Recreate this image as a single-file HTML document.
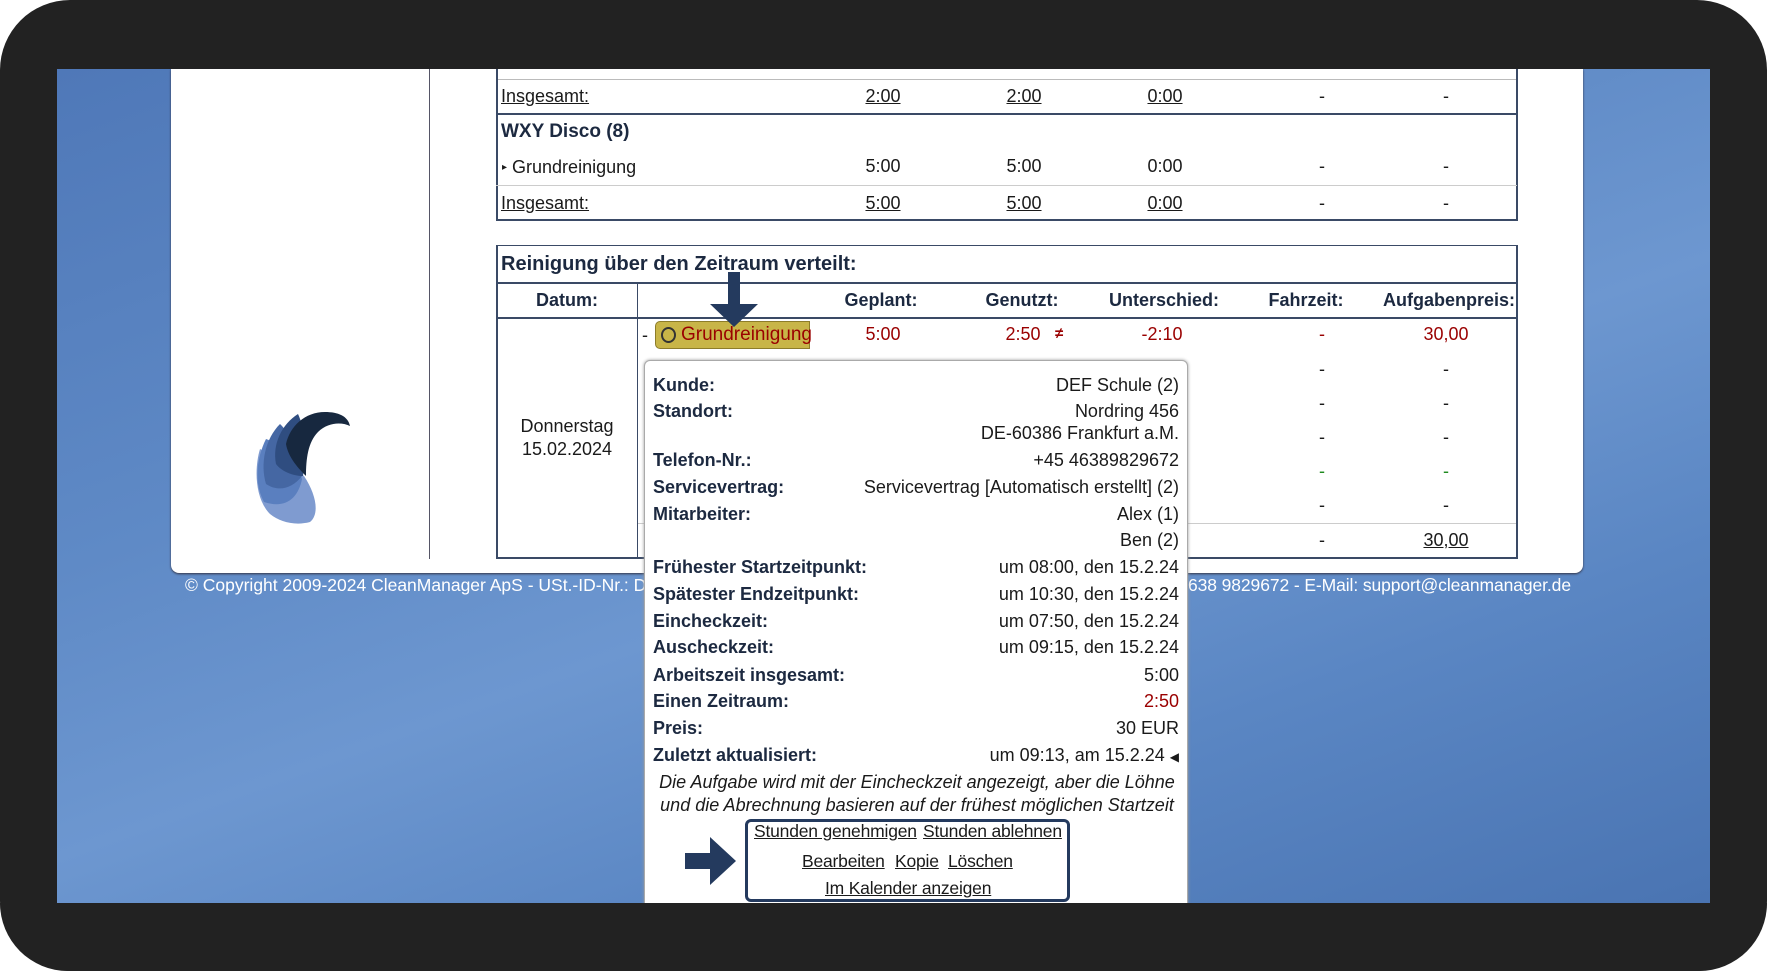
<!DOCTYPE html>
<html><head><meta charset="utf-8"><style>
*{margin:0;padding:0;box-sizing:border-box}
body{width:1767px;height:971px;background:#fff;overflow:hidden;position:relative;font-family:"Liberation Sans",sans-serif;font-size:18px;color:#1a1a1a}
.frame{position:absolute;left:0;top:0;width:1767px;height:971px;background:#222;border-radius:70px}
.blue{position:absolute;left:57px;top:69px;width:1653px;height:834px;background:linear-gradient(160deg,#4f78b8 0%,#5f8ac6 35%,#6d97d0 55%,#5a86c3 75%,#4a74b2 100%)}
.panel{position:absolute;left:171px;top:69px;width:1412px;height:504px;background:#fff;border-radius:0 0 8px 8px;box-shadow:0 1px 2px #334}
.a{position:absolute;white-space:nowrap}
.c{transform:translateX(-50%)}
.b{font-weight:bold;color:#1c2940}
.u{text-decoration:underline}
.red{color:#9a0000}
.hl{position:absolute;height:2px;background:#3a4a66}
.gl{position:absolute;height:1px;background:#ccc}
.vl{position:absolute;width:2px;background:#3a4a66}
.foot{position:absolute;top:575px;color:#fff;font-size:17.5px;white-space:nowrap}
.pop{position:absolute;left:644px;top:360px;width:544px;height:545px;background:#fff;border:1px solid #aaa;border-radius:6px 6px 0 0;box-shadow:0 0 3px #999}
.pop .a{font-size:18px}
.box{position:absolute;left:745px;top:819px;width:325px;height:83px;border:3px solid #243a5e;border-radius:6px}
.lk{font-size:17.5px;letter-spacing:-0.2px}
</style></head><body>
<div class="frame"></div>
<div class="blue"></div>
<div class="panel"></div>
<div class="vl" style="left:429px;top:69px;height:490px;width:1px;background:#556"></div>

<div class="gl" style="left:496px;top:79px;width:1021px;background:#bbb"></div>
<div class="vl" style="left:496px;top:69px;height:151px"></div>
<div class="vl" style="left:1516px;top:69px;height:151px"></div>
<div class="a u" style="left:501px;top:86px">Insgesamt:</div>
<div class="a u c" style="left:883px;top:86px">2:00</div>
<div class="a u c" style="left:1024px;top:86px">2:00</div>
<div class="a u c" style="left:1165px;top:86px">0:00</div>
<div class="a c" style="left:1322px;top:86px">-</div>
<div class="a c" style="left:1446px;top:86px">-</div>
<div class="hl" style="left:496px;top:113px;width:1022px"></div>
<div class="a b" style="left:501px;top:121px;font-size:19px">WXY Disco (8)</div>
<div class="a" style="left:502px;top:157px"><span style="font-size:10px;position:relative;top:-3px">&#9656;</span> Grundreinigung</div>
<div class="a c" style="left:883px;top:156px">5:00</div>
<div class="a c" style="left:1024px;top:156px">5:00</div>
<div class="a c" style="left:1165px;top:156px">0:00</div>
<div class="a c" style="left:1322px;top:156px">-</div>
<div class="a c" style="left:1446px;top:156px">-</div>
<div class="gl" style="left:496px;top:185px;width:1021px"></div>
<div class="a u" style="left:501px;top:193px">Insgesamt:</div>
<div class="a u c" style="left:883px;top:193px">5:00</div>
<div class="a u c" style="left:1024px;top:193px">5:00</div>
<div class="a u c" style="left:1165px;top:193px">0:00</div>
<div class="a c" style="left:1322px;top:193px">-</div>
<div class="a c" style="left:1446px;top:193px">-</div>
<div class="hl" style="left:496px;top:219px;width:1022px"></div>

<div style="position:absolute;left:496px;top:245px;width:1022px;height:314px;border:2px solid #3a4a66;border-top-width:1px"></div>
<div class="a b" style="left:501px;top:253px;font-size:20px">Reinigung über den Zeitraum verteilt:</div>
<div class="hl" style="left:496px;top:282px;width:1022px"></div>
<div class="hl" style="left:496px;top:317px;width:1022px"></div>
<div class="vl" style="left:637px;top:283px;height:276px;width:1px"></div>
<div class="a b c" style="left:567px;top:290px">Datum:</div>
<div class="a b c" style="left:881px;top:290px">Geplant:</div>
<div class="a b c" style="left:1022px;top:290px">Genutzt:</div>
<div class="a b c" style="left:1164px;top:290px">Unterschied:</div>
<div class="a b c" style="left:1306px;top:290px">Fahrzeit:</div>
<div class="a b c" style="left:1449px;top:290px">Aufgabenpreis:</div>
<div class="a" style="left:642px;top:325px">-</div>
<div style="position:absolute;left:655px;top:321px;width:155px;height:28px;background:#c8b548;border:1px solid #8d7d2a;border-radius:5px 0 0 5px"></div>
<div style="position:absolute;left:661px;top:327px;width:15px;height:16px;border:2px solid #333;border-radius:50%"></div>
<div class="a red" style="left:681px;top:324px;font-size:19px">Grundreinigung</div>
<div class="a red c" style="left:883px;top:324px">5:00</div>
<div class="a red c" style="left:1023px;top:324px">2:50</div>
<div class="a red" style="left:1055px;top:325px;font-size:15px;font-weight:bold">&#8800;</div>
<div class="a red c" style="left:1162px;top:324px">-2:10</div>
<div class="a red c" style="left:1322px;top:324px">-</div>
<div class="a red c" style="left:1446px;top:324px">30,00</div>
<div class="a c" style="left:1322px;top:359px">-</div><div class="a c" style="left:1446px;top:359px">-</div>
<div class="a c" style="left:1322px;top:393px">-</div><div class="a c" style="left:1446px;top:393px">-</div>
<div class="a c" style="left:1322px;top:427px">-</div><div class="a c" style="left:1446px;top:427px">-</div>
<div class="a c" style="left:1322px;top:461px;color:#1f8a1f">-</div><div class="a c" style="left:1446px;top:461px;color:#1f8a1f">-</div>
<div class="a c" style="left:1322px;top:495px">-</div><div class="a c" style="left:1446px;top:495px">-</div>
<div class="gl" style="left:638px;top:523px;width:878px"></div>
<div class="a c" style="left:1322px;top:530px">-</div>
<div class="a u c" style="left:1446px;top:530px">30,00</div>
<div class="a c" style="left:567px;top:415px;text-align:center;line-height:23px">Donnerstag<br>15.02.2024</div>

<svg style="position:absolute;left:250px;top:404px" width="104" height="122" viewBox="0 0 104 122">
<path d="M20 110 C5 95 4 65 10 45 C20 50 38 60 54 72 C66 90 70 110 60 118 C45 122 30 118 20 110Z" fill="#7f9bd0"/>
<path d="M14 98 C4 80 6 55 16 35 C30 40 45 55 52 75 C48 95 35 105 14 98Z" fill="#5a7fbf"/>
<path d="M16 80 C10 60 15 35 30 20 C40 30 50 45 52 72 C42 85 28 88 16 80Z" fill="#4567a3"/>
<path d="M26 60 C22 40 32 20 48 10 C55 25 56 45 53 72 C44 72 32 68 26 60Z" fill="#2f4d80"/>
<path d="M36 40 C40 22 55 8 75 8 C88 8 98 12 100 22 C92 18 78 18 68 28 C58 38 56 55 56 72 C46 62 38 52 36 40Z" fill="#17283f"/>
</svg>

<svg style="position:absolute;left:709px;top:270px" width="52" height="60"><path d="M19 2 H31 V34 H49 L25 57 L1 34 H19Z" fill="#243a5e"/></svg>

<div class="foot" style="left:185px">© Copyright 2009-2024 CleanManager ApS - USt.-ID-Nr.: DK 12345678 - Tel.: +49 (0) 40</div>
<div class="foot" style="left:1188px;letter-spacing:-0.1px">638 9829672 - E-Mail: support@cleanmanager.de</div>

<div class="pop">
<div class="a b" style="left:8px;top:14px">Kunde:</div><div class="a" style="right:8px;top:14px">DEF Schule (2)</div>
<div class="a b" style="left:8px;top:40px">Standort:</div><div class="a" style="right:8px;top:40px">Nordring 456</div>
<div class="a" style="right:8px;top:62px">DE-60386 Frankfurt a.M.</div>
<div class="a b" style="left:8px;top:89px">Telefon-Nr.:</div><div class="a" style="right:8px;top:89px">+45 46389829672</div>
<div class="a b" style="left:8px;top:116px">Servicevertrag:</div><div class="a" style="right:8px;top:116px">Servicevertrag [Automatisch erstellt] (2)</div>
<div class="a b" style="left:8px;top:143px">Mitarbeiter:</div><div class="a" style="right:8px;top:143px">Alex (1)</div>
<div class="a" style="right:8px;top:169px">Ben (2)</div>
<div class="a b" style="left:8px;top:196px">Frühester Startzeitpunkt:</div><div class="a" style="right:8px;top:196px">um 08:00, den 15.2.24</div>
<div class="a b" style="left:8px;top:223px">Spätester Endzeitpunkt:</div><div class="a" style="right:8px;top:223px">um 10:30, den 15.2.24</div>
<div class="a b" style="left:8px;top:250px">Eincheckzeit:</div><div class="a" style="right:8px;top:250px">um 07:50, den 15.2.24</div>
<div class="a b" style="left:8px;top:276px">Auscheckzeit:</div><div class="a" style="right:8px;top:276px">um 09:15, den 15.2.24</div>
<div class="a b" style="left:8px;top:304px">Arbeitszeit insgesamt:</div><div class="a" style="right:8px;top:304px">5:00</div>
<div class="a b" style="left:8px;top:330px">Einen Zeitraum:</div><div class="a red" style="right:8px;top:330px">2:50</div>
<div class="a b" style="left:8px;top:357px">Preis:</div><div class="a" style="right:8px;top:357px">30 EUR</div>
<div class="a b" style="left:8px;top:384px">Zuletzt aktualisiert:</div><div class="a" style="right:8px;top:384px">um 09:13, am 15.2.24 <span style="font-size:12px">&#9664;</span></div>
<div class="a" style="left:0;width:544px;text-align:center;top:410px;font-style:italic;line-height:23px">Die Aufgabe wird mit der Eincheckzeit angezeigt, aber die Löhne<br>und die Abrechnung basieren auf der frühest möglichen Startzeit</div>
</div>
<svg style="position:absolute;left:683px;top:835px" width="58" height="52"><path d="M2 18 H27 V2 L53 26 L27 50 V34 H2Z" fill="#243a5e"/></svg>
<div class="box"></div>
<div class="a u lk" style="left:754px;top:821px">Stunden genehmigen</div>
<div class="a u lk" style="left:923px;top:821px">Stunden ablehnen</div>
<div class="a u lk" style="left:802px;top:851px">Bearbeiten</div>
<div class="a u lk" style="left:895px;top:851px">Kopie</div>
<div class="a u lk" style="left:948px;top:851px">Löschen</div>
<div class="a u lk" style="left:825px;top:878px">Im Kalender anzeigen</div>
<div style="position:absolute;left:0;top:903px;width:1767px;height:68px;background:#222;border-radius:0 0 70px 70px"></div>
</body></html>
